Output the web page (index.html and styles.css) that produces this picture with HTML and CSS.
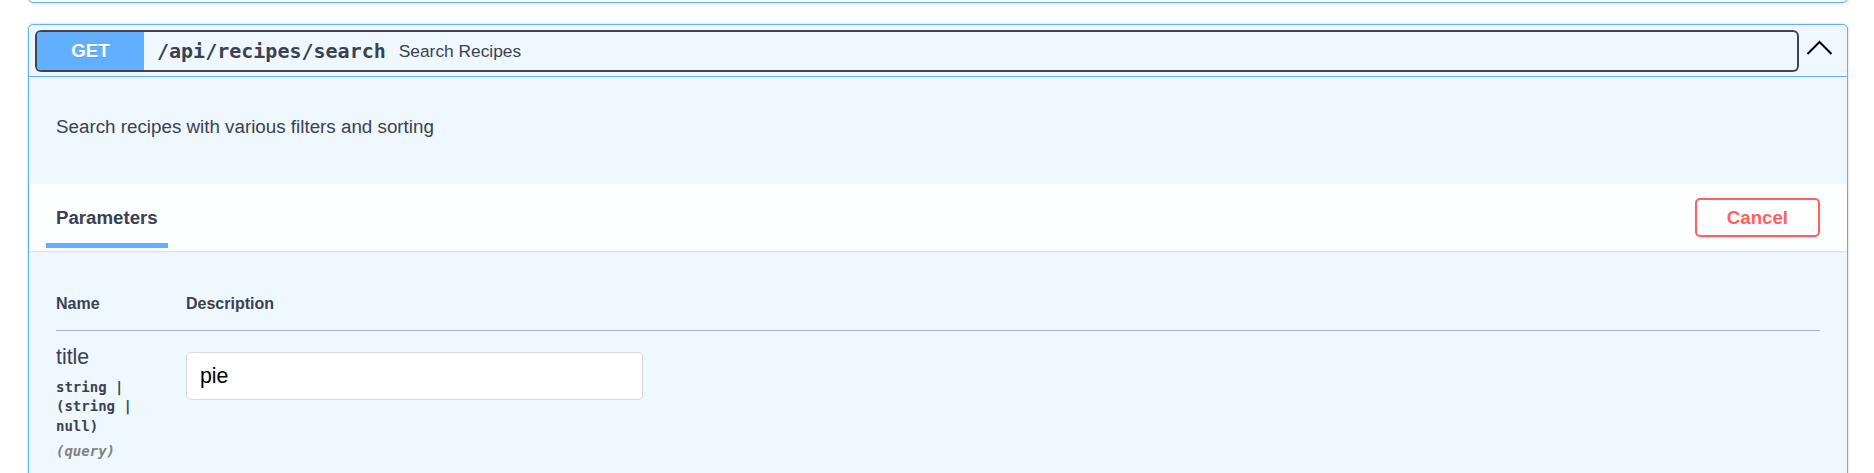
FILE: index.html
```html
<!DOCTYPE html>
<html lang="en">
<head>
<meta charset="utf-8">
<title>Search Recipes</title>
<link rel="stylesheet" href="styles.css">
</head>
<body>
<div class="wrapper">
  <div class="opblock opblock-prev"></div>
  <div class="opblock">
    <div class="summary">
      <div class="summary-control">
        <span class="method">GET</span>
        <span class="path">/api/recipes/search</span>
        <span class="summary-desc">Search Recipes</span>
      </div>
      <svg class="arrow" viewBox="0 0 27 26" width="27" height="26" aria-hidden="true">
        <polyline points="1.5,16 13.5,4 25.5,16" fill="none" stroke="#000" stroke-width="2"/>
      </svg>
    </div>
    <div class="op-body">
      <div class="description">
        <p>Search recipes with various filters and sorting</p>
      </div>
      <div class="section-header">
        <h4 class="tab"><span class="tab-label">Parameters</span></h4>
        <button class="btn-cancel" type="button">Cancel</button>
      </div>
      <div class="table-container">
        <div class="params-head">
          <div class="col-name">Name</div>
          <div class="col-desc">Description</div>
        </div>
        <div class="params-row">
          <div class="col-name">
            <div class="param-name">title</div>
            <div class="param-type">string | (string | null)</div>
            <div class="param-in">(query)</div>
          </div>
          <div class="col-desc">
            <input class="param-input" type="text" value="pie">
          </div>
        </div>
      </div>
    </div>
  </div>
</div>
</body>
</html>
```
FILE: styles.css
```css
* {
  box-sizing: border-box;
}

html,
body {
  margin: 0;
  background: #fff;
}

body {
  font-family: "Liberation Sans", Arial, sans-serif;
  color: #3b4151;
}

.wrapper {
  padding: 0 26px 0 28px;
}

.opblock {
  border: 1px solid #61affe;
  border-radius: 5px;
  background: #eff7ff;
  box-shadow: 0 0 3px rgba(0, 0, 0, 0.19);
  margin-bottom: 20px;
}

.opblock-prev {
  height: 40px;
  margin-top: -37px;
  margin-bottom: 21px;
  background: #fff;
}

/* summary bar */
.summary {
  display: flex;
  align-items: center;
  padding: 7px 14px 6px 8px;
  border-bottom: 1px solid #61affe;
}

.summary-control {
  flex: 1;
  display: flex;
  align-items: center;
  height: 38px;
  border-radius: 4px;
  box-shadow: 0 0 0 2px #41444e;
}

.method {
  flex: none;
  width: 107px;
  height: 38px;
  line-height: 38px;
  background: #61affe;
  color: #fff;
  font-size: 18.67px;
  font-weight: 700;
  text-align: center;
  border-radius: 4px 0 0 4px;
  text-shadow: 0 1px 0 rgba(0, 0, 0, 0.1);
}

.path {
  font-family: "DejaVu Sans Mono", "Liberation Mono", monospace;
  font-weight: 700;
  font-size: 20px;
  padding: 0 13px;
  color: #3b4151;
}

.summary-desc {
  font-size: 17.33px;
  color: #3b4151;
}

.arrow {
  flex: none;
  margin-left: 9px;
}

/* description */
.description {
  padding: 20px 27px;
  margin-bottom: 7px;
}

.description p {
  margin: 19px 0;
  font-size: 18.8px;
  line-height: 22px;
}

/* section header */
.section-header {
  display: flex;
  align-items: center;
  justify-content: space-between;
  min-height: 67px;
  padding: 0 27px;
  background: rgba(255, 255, 255, 0.8);
  box-shadow: 0 1px 2px rgba(0, 0, 0, 0.1);
}

.tab {
  margin: 0;
  font-size: 18.67px;
  line-height: 22px;
  font-weight: 700;
  color: #3b4151;
}

.tab-label {
  position: relative;
}

.tab-label::after {
  content: "";
  position: absolute;
  left: 50%;
  bottom: -20px;
  width: 120%;
  height: 5px;
  transform: translateX(-50%);
  background: #61affe;
}

.btn-cancel {
  font-family: inherit;
  font-size: 18.67px;
  font-weight: 700;
  line-height: 21px;
  padding: 7px 30px;
  border: 2px solid #ff6060;
  border-radius: 5px;
  color: #ff6060;
  background: transparent;
  box-shadow: 0 1px 2px rgba(0, 0, 0, 0.1);
}

/* parameters table */
.table-container {
  padding: 27px;
}

.params-head,
.params-row {
  display: grid;
  grid-template-columns: 130px 1fr;
}

.params-head {
  border-bottom: 1px solid #a9b1bf;
}

.params-head > div {
  padding: 16px 0;
  font-size: 16px;
  line-height: 20px;
  font-weight: 700;
}

.params-row {
  padding-top: 14px;
}

.params-row .col-name {
  padding-right: 20px;
}

.param-name {
  font-size: 21.33px;
  line-height: 24.5px;
  color: #3b4151;
}

.param-type {
  font-family: "DejaVu Sans Mono", "Liberation Mono", monospace;
  font-size: 14px;
  font-weight: 700;
  line-height: 19.5px;
  padding: 8px 0 6px;
  color: #3b4151;
}

.param-in {
  font-family: "DejaVu Sans Mono", "Liberation Mono", monospace;
  font-size: 14px;
  font-weight: 700;
  font-style: italic;
  line-height: 19.5px;
  color: #808080;
}

.param-input {
  display: block;
  width: 457px;
  height: 48px;
  margin-top: 7px;
  padding: 0 13px;
  border: 1px solid #d9d9d9;
  border-radius: 5px;
  background: #fff;
  font-family: "Liberation Sans", Arial, sans-serif;
  font-size: 21.33px;
  color: #000;
}
```
